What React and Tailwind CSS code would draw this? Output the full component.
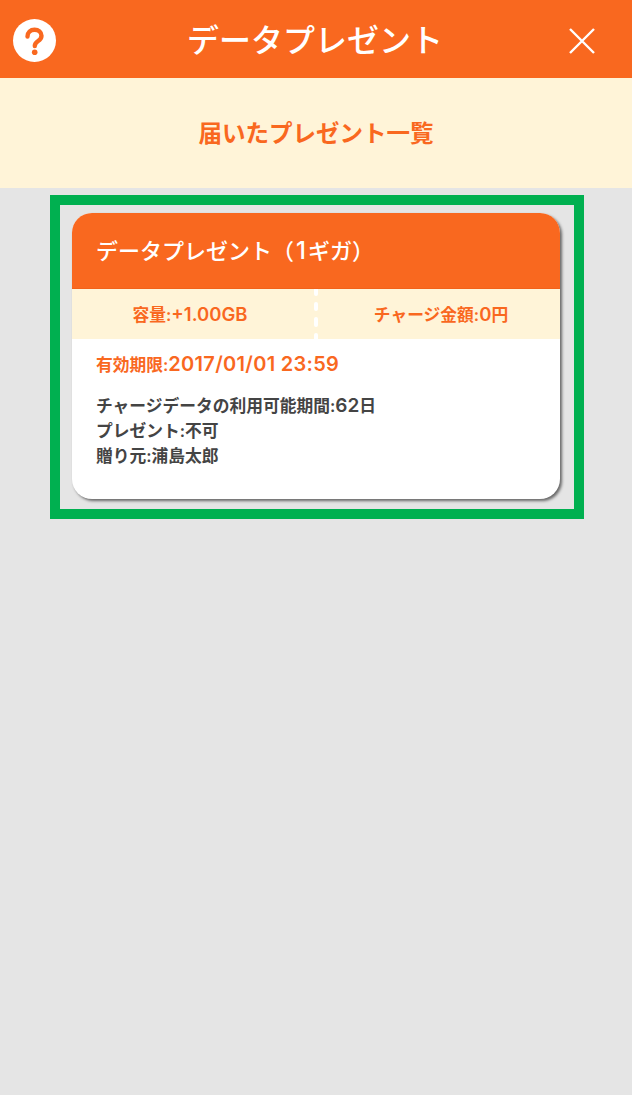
import React from 'react'

const App = () => {
  return (
    <div className="min-h-[1095px] bg-[#e5e5e5] font-['Inter','Noto_Sans_CJK_JP',sans-serif]">
      <header className="h-[78px] bg-[#f9681f] flex items-center justify-between pl-[13px] pr-[37px]">
        <div className="w-[43px] h-[43px] rounded-full bg-white flex items-center justify-center mt-[3px]">
          <svg width="43" height="43" viewBox="0 0 43 43" fill="none">
            <path d="M14.5 17.5c0-4.2 3-6.8 7-6.8s7 2.5 7 6c0 2.8-1.7 4.2-3.7 5.6-2 1.4-3 2.3-3 4.7" stroke="#f9681f" strokeWidth="4.4" strokeLinecap="round" />
            <circle cx="21.7" cy="33.2" r="2.8" fill="#f9681f" />
          </svg>
        </div>
        <h1 className="text-[32px] leading-none font-medium text-white ml-[5px] mt-[4px]">データプレゼント</h1>
        <svg width="26" height="26" viewBox="0 0 26 26" fill="none" className="mt-[3px]">
          <path d="M1 1l24 24M25 1L1 25" stroke="#fff" strokeWidth="2.4" />
        </svg>
      </header>

      <div className="h-[110px] bg-[#fff4d8] flex items-center justify-center pt-[1px]">
        <h2 className="text-[23.5px] font-bold text-[#f9681f]">届いたプレゼント一覧</h2>
      </div>

      <div className="mt-[7px] ml-[50px] w-[534px] h-[324px] border-[10px] border-[#00b050] pt-[8px] pl-[12px]">
        <div className="w-[488px] h-[286px] rounded-[20px] bg-white overflow-hidden shadow-[2px_2px_3px_rgba(0,0,0,0.55)]">
          <div className="h-[76px] bg-[#f9681f] border-b border-b-[#f2621a] flex items-center pl-[24px]">
            <h3 className="text-[22px] leading-[30px] font-medium text-white">
              データプレゼント（<span className="text-[24px] px-[2px]">1</span>ギガ）
            </h3>
          </div>
          <div className="h-[50px] bg-[#fff4d8] flex text-[16.75px] font-semibold text-[#f9681f]">
            <div className="w-[242px] flex items-center justify-center pr-[6px]">
              <span className="leading-[24px]">容量:<span className="text-[18.5px]">+1.00GB</span></span>
            </div>
            <div className="w-[4px] h-full overflow-hidden flex flex-col items-center gap-[6px]">
              {[0, 1, 2, 3].map((i) => (
                <span key={i} className="w-[3.5px] h-[9.5px] shrink-0 rounded-full bg-white first:-mt-[3px]" />
              ))}
            </div>
            <div className="flex-1 flex items-center justify-center pl-[4px]">
              <span className="leading-[24px]">チャージ金額:<span className="text-[18.5px]">0</span>円</span>
            </div>
          </div>
          <div className="pl-[24px] pt-[12px]">
            <p className="text-[16.75px] font-semibold leading-[26px] text-[#f9681f]">
              有効期限:<span className="text-[20px] tracking-[0.3px]">2017/01/01 23:59</span>
            </p>
            <div className="mt-[15px] text-[16.75px] font-semibold leading-[25px] text-[#444444]">
              <p>チャージデータの利用可能期間:<span className="text-[19px]">62</span>日</p>
              <p>プレゼント:不可</p>
              <p>贈り元:浦島太郎</p>
            </div>
          </div>
        </div>
      </div>
    </div>
  )
}

export default App
